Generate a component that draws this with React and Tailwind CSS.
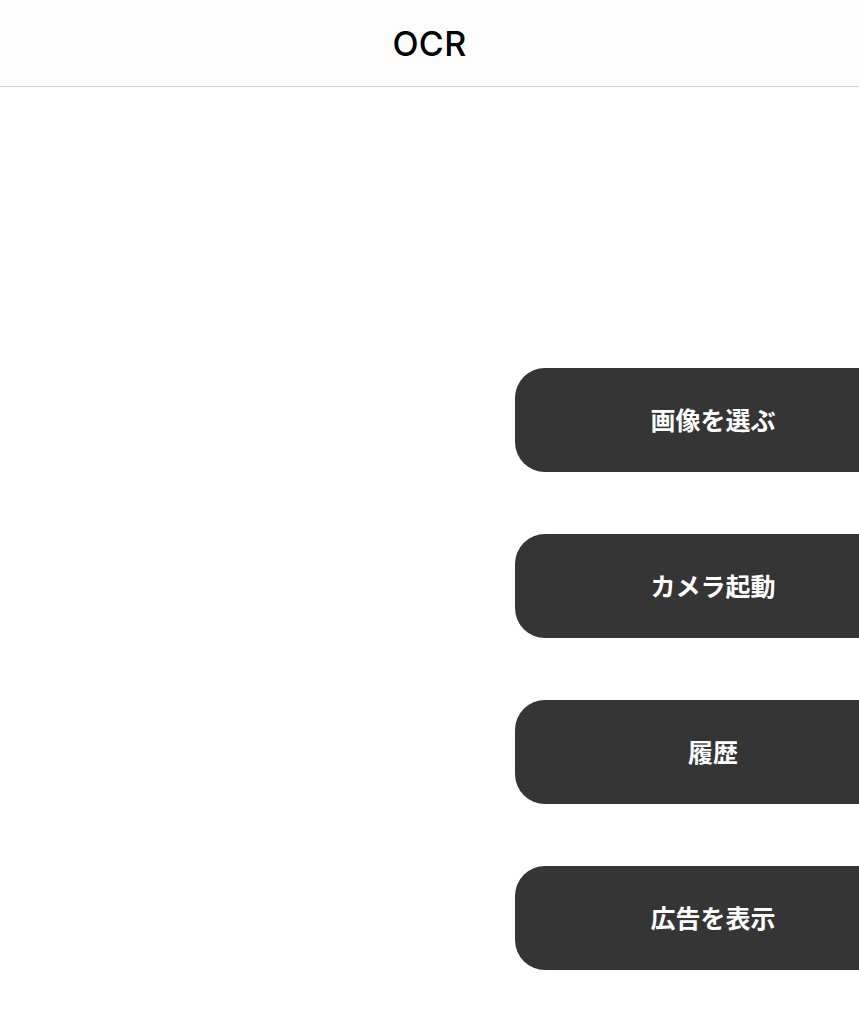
const BUTTONS = ['画像を選ぶ', 'カメラ起動', '履歴', '広告を表示'];

export default function App() {
  return (
    <div className="min-h-screen w-full overflow-hidden bg-white" style={{ fontFamily: 'Inter, "Noto Sans CJK JP", sans-serif' }}>
      {/* Header */}
      <header className="flex h-[87px] items-center justify-center border-b border-[#cfcfcf] bg-[#fdfdfd]">
        <h1 className="text-[34px] font-medium tracking-[0.01em] text-black">OCR</h1>
      </header>

      {/* Actions */}
      <main className="flex flex-col gap-[62px] pl-[515px] pt-[281px]">
        {BUTTONS.map(label => (
          <button
            key={label}
            className="flex h-[104px] w-[396px] shrink-0 items-center justify-center rounded-[30px] bg-[#353535] text-[25px] font-bold text-white"
            style={{ fontFamily: '"Noto Sans CJK JP", sans-serif' }}
          >
            {label}
          </button>
        ))}
      </main>
    </div>
  );
}
